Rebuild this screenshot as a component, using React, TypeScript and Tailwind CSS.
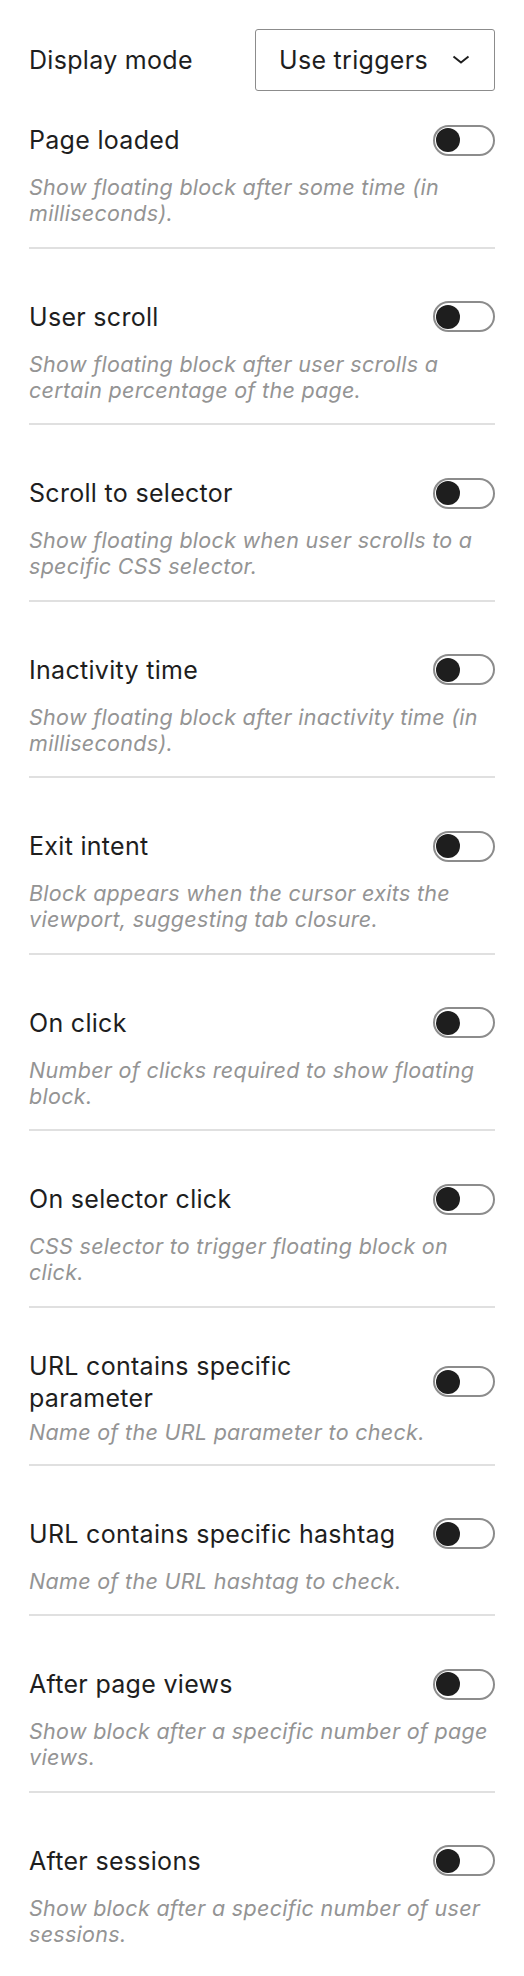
import React from "react";

type Item = { t: string; d: string; wrap?: boolean };

const items: Item[] = [
  { t: "Page loaded", d: "Show floating block after some time (in milliseconds)." },
  { t: "User scroll", d: "Show floating block after user scrolls a certain percentage of the page." },
  { t: "Scroll to selector", d: "Show floating block when user scrolls to a specific CSS selector." },
  { t: "Inactivity time", d: "Show floating block after inactivity time (in milliseconds)." },
  { t: "Exit intent", d: "Block appears when the cursor exits the viewport, suggesting tab closure." },
  { t: "On click", d: "Number of clicks required to show floating block." },
  { t: "On selector click", d: "CSS selector to trigger floating block on click." },
  { t: "URL contains specific parameter", d: "Name of the URL parameter to check.", wrap: true },
  { t: "URL contains specific hashtag", d: "Name of the URL hashtag to check." },
  { t: "After page views", d: "Show block after a specific number of page views." },
  { t: "After sessions", d: "Show block after a specific number of user sessions." },
];

function Toggle() {
  return (
    <div className="flex h-[31px] w-[62px] shrink-0 items-center rounded-full border-2 border-[#8c8c8c] bg-white px-[1px]">
      <div className="h-[24px] w-[24px] rounded-full bg-[#1e1e1e]" />
    </div>
  );
}

export default function App() {
  return (
    <div className="min-h-[1976px] bg-white px-[29px] pt-[29px] font-['Inter','Noto_Sans',sans-serif] text-[#1e1e1e]">
      <div className="flex items-center justify-between">
        <span className="text-[25px] leading-[32px] tracking-[0.3px]">Display mode</span>
        <div className="flex h-[62px] w-[240px] items-center justify-between rounded-[3px] border-[1.5px] border-[#8c8c8c] pl-[23px] pr-[24px]">
          <span className="text-[25px] leading-[32px] tracking-[0.3px]">Use triggers</span>
          <svg width="18" height="10" viewBox="0 0 18 10" fill="none">
            <polyline points="1.5,1.5 9,7.5 16.5,1.5" stroke="#1e1e1e" strokeWidth="2" />
          </svg>
        </div>
      </div>
      <div>
        {items.map((it, i) => {
          const last = i === items.length - 1;
          return (
            <div
              key={it.t}
              className={`${i === 0 ? "pt-[23px]" : "pt-[42px]"} ${it.wrap ? "pb-[19px]" : "pb-[20.5px]"} ${
                last ? "" : "border-b-2 border-[#e0e0e0]"
              }`}
            >
              <div className="flex min-h-[52px] items-center justify-between gap-6">
                <span className="text-[25px] leading-[32px] tracking-[0.3px]">{it.t}</span>
                <Toggle />
              </div>
              <p
                className={`${
                  it.wrap ? "mt-[5px]" : "mt-[8px]"
                } text-[21.5px] italic leading-[26px] tracking-[0.3px] text-[#949494]`}
              >
                {it.d}
              </p>
            </div>
          );
        })}
      </div>
    </div>
  );
}
